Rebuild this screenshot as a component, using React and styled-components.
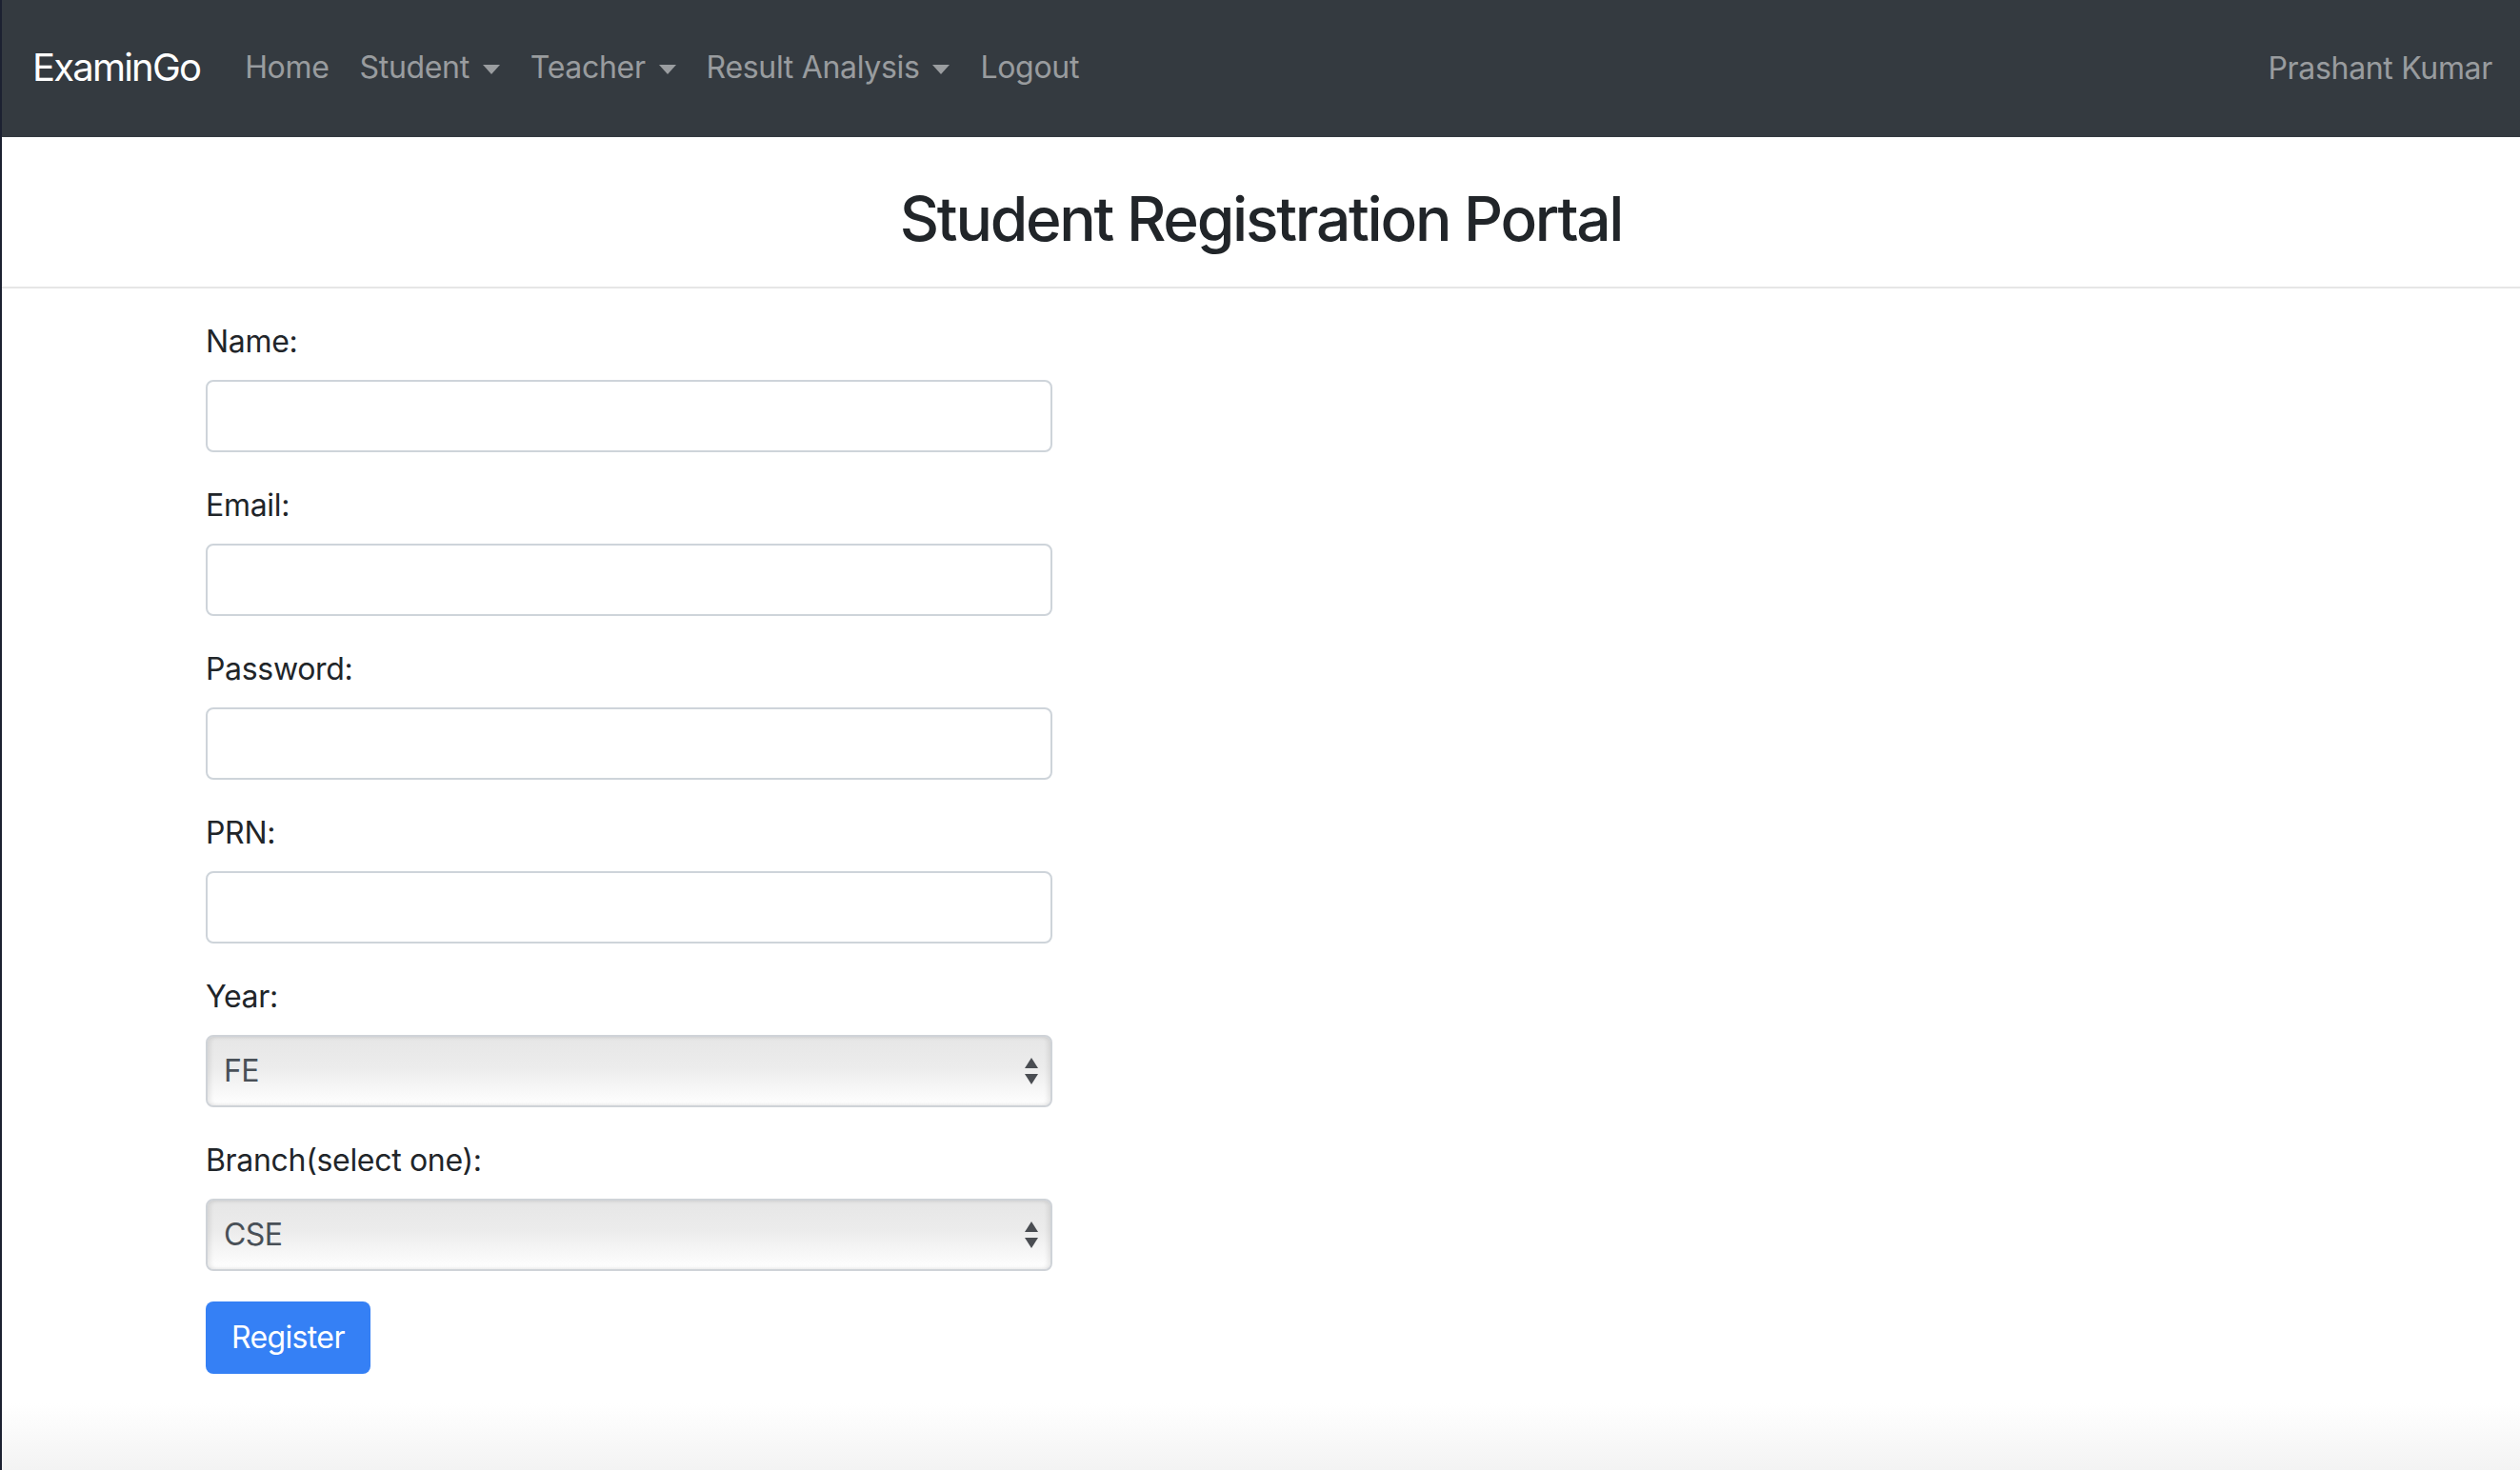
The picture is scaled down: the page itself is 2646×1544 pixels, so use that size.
import styled, { createGlobalStyle } from "styled-components";

const GlobalStyle = createGlobalStyle`
  html,
  body {
    margin: 0;
    padding: 0;
  }

  body {
    font-family: Inter, "Noto Sans", "Liberation Sans", sans-serif;
    letter-spacing: -0.02em;
    color: #212529;
  }

  * {
    box-sizing: border-box;
  }
`;

const Page = styled.div`
  min-height: 100vh;
  border-left: 2px solid #1c2131;
  background: linear-gradient(
    to bottom,
    #ffffff calc(100% - 70px),
    #f3f3f3 100%
  );
`;

const Navbar = styled.nav`
  display: flex;
  align-items: center;
  height: 144px;
  padding: 0 29px 3px 32px;
  background-color: #343a40;
`;

const Brand = styled.a`
  font-size: 40px;
  line-height: 60px;
  letter-spacing: -0.045em;
  color: #ffffff;
  margin-right: 31px;
  text-decoration: none;
`;

const NavList = styled.ul`
  display: flex;
  list-style: none;
  margin: 0;
  padding: 0;
`;

const NavLink = styled.a`
  display: flex;
  align-items: center;
  padding: 0 16px;
  font-size: 32px;
  line-height: 48px;
  color: rgba(255, 255, 255, 0.5);
  text-decoration: none;
`;

const Caret = styled.span`
  display: inline-block;
  margin-left: 14px;
  margin-top: 4px;
  border-top: 10px solid rgba(255, 255, 255, 0.5);
  border-left: 9px solid transparent;
  border-right: 9px solid transparent;
`;

const UserName = styled.span`
  margin-left: auto;
  font-size: 32px;
  line-height: 48px;
  padding-top: 3px;
  color: rgba(255, 255, 255, 0.5);
`;

const Header = styled.header`
  padding: 48px 0 32px;
  border-bottom: 2px solid #e6e6e6;
  text-align: center;
`;

const Title = styled.h2`
  margin: 0;
  font-size: 64px;
  font-weight: 500;
  line-height: 1.2;
  letter-spacing: -0.035em;
  color: #212529;
`;

const Form = styled.form`
  width: 889px;
  margin-left: 214px;
  padding: 32px 0 40px;
`;

const Group = styled.div`
  margin-bottom: 32px;
`;

const Label = styled.label`
  display: block;
  margin-bottom: 16px;
  font-size: 32px;
  line-height: 48px;
  color: #212529;
`;

const Input = styled.input`
  display: block;
  width: 100%;
  height: 76px;
  padding: 12px 24px;
  font-family: inherit;
  font-size: 32px;
  color: #495057;
  background: #ffffff;
  border: 2px solid #ced4da;
  border-radius: 8px;
  outline: none;
`;

const SelectWrap = styled.div`
  position: relative;
`;

const Select = styled.select`
  display: block;
  width: 100%;
  height: 76px;
  padding: 0 60px 0 17px;
  font-family: inherit;
  font-size: 32px;
  letter-spacing: -0.02em;
  color: #495057;
  appearance: none;
  border: 2px solid #cfd3d8;
  border-radius: 8px;
  outline: none;
  background: linear-gradient(
    to bottom,
    #e6e6e6 0%,
    #ececec 45%,
    #f8f8f8 80%,
    #ffffff 100%
  );
  box-shadow: inset 3px 0 4px rgba(0, 0, 0, 0.08),
    inset -3px 0 4px rgba(0, 0, 0, 0.08);
`;

const Arrows = styled.svg`
  position: absolute;
  right: 15px;
  top: 50%;
  transform: translateY(-50%);
  pointer-events: none;
`;

const Button = styled.button`
  height: 76px;
  padding: 0 27px;
  font-family: inherit;
  font-size: 32px;
  letter-spacing: -0.02em;
  color: #ffffff;
  background-color: #3580f5;
  border: none;
  border-radius: 8px;
  cursor: pointer;
`;

const SelectArrows = () => (
  <Arrows width="14" height="28" viewBox="0 0 14 28">
    <path d="M7 0 L14 11 L0 11 Z" fill="#4a4d52" />
    <path d="M0 17 L14 17 L7 28 Z" fill="#4a4d52" />
  </Arrows>
);

const navItems = [
  { label: "Home" },
  { label: "Student", dropdown: true },
  { label: "Teacher", dropdown: true },
  { label: "Result Analysis", dropdown: true },
  { label: "Logout" },
];

const textFields = [
  { id: "name", label: "Name:", type: "text" },
  { id: "email", label: "Email:", type: "email" },
  { id: "password", label: "Password:", type: "password" },
  { id: "prn", label: "PRN:", type: "text" },
];

const App = () => {
  return (
    <>
      <GlobalStyle />
      <Page>
        <Navbar>
          <Brand href="#">ExaminGo</Brand>
          <NavList>
            {navItems.map((item) => (
              <li key={item.label}>
                <NavLink href="#">
                  {item.label}
                  {item.dropdown && <Caret />}
                </NavLink>
              </li>
            ))}
          </NavList>
          <UserName>Prashant Kumar</UserName>
        </Navbar>

        <Header>
          <Title>Student Registration Portal</Title>
        </Header>

        <Form onSubmit={(e) => e.preventDefault()}>
          {textFields.map((field) => (
            <Group key={field.id}>
              <Label htmlFor={field.id}>{field.label}</Label>
              <Input id={field.id} type={field.type} />
            </Group>
          ))}

          <Group>
            <Label htmlFor="year">Year:</Label>
            <SelectWrap>
              <Select id="year" defaultValue="FE">
                <option>FE</option>
                <option>SE</option>
                <option>TE</option>
                <option>BE</option>
              </Select>
              <SelectArrows />
            </SelectWrap>
          </Group>

          <Group>
            <Label htmlFor="branch">Branch(select one):</Label>
            <SelectWrap>
              <Select id="branch" defaultValue="CSE">
                <option>CSE</option>
                <option>IT</option>
                <option>ENTC</option>
                <option>MECH</option>
              </Select>
              <SelectArrows />
            </SelectWrap>
          </Group>

          <Button type="submit">Register</Button>
        </Form>
      </Page>
    </>
  );
};

export default App;
